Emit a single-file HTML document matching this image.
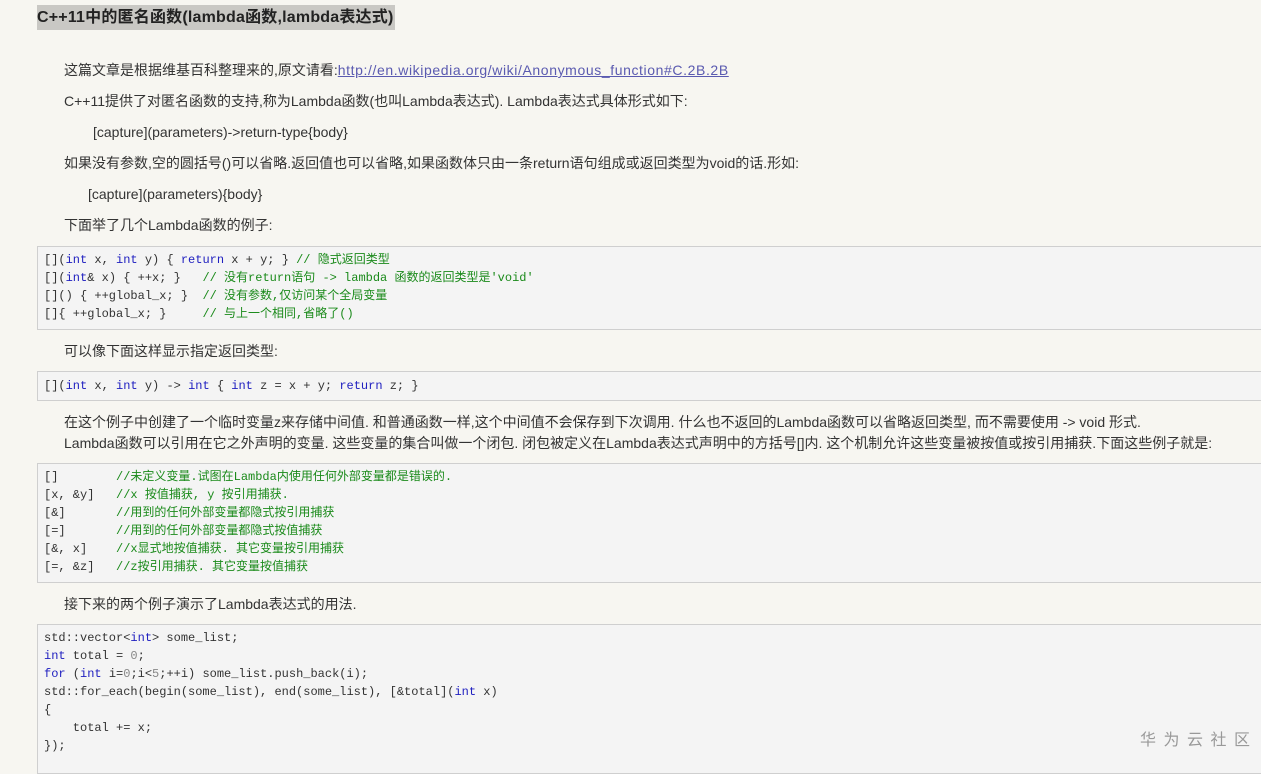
<!DOCTYPE html>
<html><head><meta charset="utf-8"><style>
body{margin:0;width:1261px;height:764px;overflow:hidden;background:#f7f6f1;font-family:"Liberation Sans","Noto Sans CJK SC",sans-serif;color:#333;position:relative}
.t{position:absolute;left:37px;top:5px;height:25px;width:358px;background:#c9c8c4;font-weight:bold;font-size:16px;line-height:25px;color:#222;white-space:nowrap;letter-spacing:0.2px}
.p{position:absolute;left:64px;font-size:14px;line-height:20px;white-space:nowrap;color:#333}
.p a{color:#5a5ab0;text-decoration:underline;letter-spacing:0.6px}
.c{position:absolute;left:37px;width:1240px;background:#f4f4f4;border:1px solid #cfcfcf;box-sizing:border-box}
.l{position:absolute;left:6px;font-family:"Liberation Mono","Noto Sans CJK SC",monospace;font-size:12px;line-height:18px;white-space:pre;color:#333}
.k{color:#2020c0}.g{color:#1a8a1a}.n{color:#888}
.w{position:absolute;left:1140px;top:726px;font-size:16px;letter-spacing:7.5px;color:#999;font-family:"Noto Sans CJK SC",sans-serif}
</style></head><body>
<div class="t">C++11中的匿名函数(lambda函数,lambda表达式)</div>
<div class="p" style="top:60px">这篇文章是根据维基百科整理来的,原文请看:<a>http://en.wikipedia.org/wiki/Anonymous_function#C.2B.2B</a></div>
<div class="p" style="top:91px">C++11提供了对匿名函数的支持,称为Lambda函数(也叫Lambda表达式). Lambda表达式具体形式如下:</div>
<div class="p" style="top:122px;left:93px">[capture](parameters)-&gt;return-type{body}</div>
<div class="p" style="top:153px">如果没有参数,空的圆括号()可以省略.返回值也可以省略,如果函数体只由一条return语句组成或返回类型为void的话.形如:</div>
<div class="p" style="top:184px;left:88px">[capture](parameters){body}</div>
<div class="p" style="top:215px">下面举了几个Lambda函数的例子:</div>
<div class="c" style="top:246px;height:84px">
<div class="l" style="top:4px">[](<span class="k">int</span> x, <span class="k">int</span> y) { <span class="k">return</span> x + y; } <span class="g">// 隐式返回类型</span></div>
<div class="l" style="top:22px">[](<span class="k">int</span>&amp; x) { ++x; }   <span class="g">// 没有return语句 -&gt; lambda 函数的返回类型是'void'</span></div>
<div class="l" style="top:40px">[]() { ++global_x; }  <span class="g">// 没有参数,仅访问某个全局变量</span></div>
<div class="l" style="top:58px">[]{ ++global_x; }     <span class="g">// 与上一个相同,省略了()</span></div>
</div>
<div class="p" style="top:341px">可以像下面这样显示指定返回类型:</div>
<div class="c" style="top:371px;height:30px">
<div class="l" style="top:5px">[](<span class="k">int</span> x, <span class="k">int</span> y) -&gt; <span class="k">int</span> { <span class="k">int</span> z = x + y; <span class="k">return</span> z; }</div>
</div>
<div class="p" style="top:412px">在这个例子中创建了一个临时变量z来存储中间值. 和普通函数一样,这个中间值不会保存到下次调用. 什么也不返回的Lambda函数可以省略返回类型, 而不需要使用 -&gt; void 形式.</div>
<div class="p" style="top:433px">Lambda函数可以引用在它之外声明的变量. 这些变量的集合叫做一个闭包. 闭包被定义在Lambda表达式声明中的方括号[]内. 这个机制允许这些变量被按值或按引用捕获.下面这些例子就是:</div>
<div class="c" style="top:463px;height:120px">
<div class="l" style="top:4px">[]        <span class="g">//未定义变量.试图在Lambda内使用任何外部变量都是错误的.</span></div>
<div class="l" style="top:22px">[x, &amp;y]   <span class="g">//x 按值捕获, y 按引用捕获.</span></div>
<div class="l" style="top:40px">[&amp;]       <span class="g">//用到的任何外部变量都隐式按引用捕获</span></div>
<div class="l" style="top:58px">[=]       <span class="g">//用到的任何外部变量都隐式按值捕获</span></div>
<div class="l" style="top:76px">[&amp;, x]    <span class="g">//x显式地按值捕获. 其它变量按引用捕获</span></div>
<div class="l" style="top:94px">[=, &amp;z]   <span class="g">//z按引用捕获. 其它变量按值捕获</span></div>
</div>
<div class="p" style="top:594px">接下来的两个例子演示了Lambda表达式的用法.</div>
<div class="c" style="top:624px;height:150px">
<div class="l" style="top:4px">std::vector&lt;<span class="k">int</span>&gt; some_list;</div>
<div class="l" style="top:22px"><span class="k">int</span> total = <span class="n">0</span>;</div>
<div class="l" style="top:40px"><span class="k">for</span> (<span class="k">int</span> i=<span class="n">0</span>;i&lt;<span class="n">5</span>;++i) some_list.push_back(i);</div>
<div class="l" style="top:58px">std::for_each(begin(some_list), end(some_list), [&amp;total](<span class="k">int</span> x)</div>
<div class="l" style="top:76px">{</div>
<div class="l" style="top:94px">    total += x;</div>
<div class="l" style="top:112px">});</div>
</div>
<div class="w">华为云社区</div>
</body></html>
